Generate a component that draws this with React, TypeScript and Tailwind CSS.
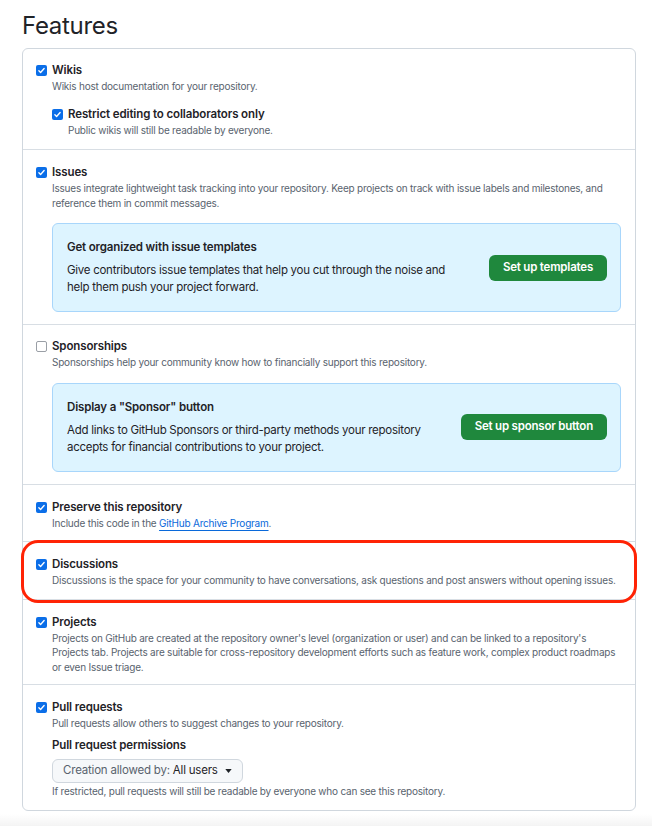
import type { ReactNode } from "react";

const font = { fontFamily: "Inter, 'Noto Sans', sans-serif" };

const Checkbox = ({ checked }: { checked: boolean }) =>
  checked ? (
    <span className="mt-[2px] flex h-[11px] w-[11px] shrink-0 items-center justify-center rounded-[2px] bg-[#0b6ee8]">
      <svg viewBox="0 0 12 12" className="h-[9px] w-[9px]" fill="none">
        <path d="M2.5 6.3l2.3 2.3 4.7-5.2" stroke="white" strokeWidth="1.8" strokeLinecap="round" strokeLinejoin="round" />
      </svg>
    </span>
  ) : (
    <span className="mt-[2px] h-[11px] w-[11px] shrink-0 rounded-[2px] border border-[#9a9fa6] bg-white" />
  );

const Option = ({
  checked = true,
  title,
  children,
  extra,
}: {
  checked?: boolean;
  title: string;
  children: ReactNode;
  extra?: ReactNode;
}) => (
  <div className="flex items-start gap-[5px]">
    <Checkbox checked={checked} />
    <div className="min-w-0 flex-1">
      <div className="text-[11.5px] font-semibold leading-[15px] tracking-[-0.12px] text-[#1f2328]">{title}</div>
      <p className="mt-[1px] text-[10px] leading-[14.5px] tracking-[-0.22px] text-[#59636e]">{children}</p>
      {extra}
    </div>
  </div>
);

const Callout = ({ title, text, button }: { title: string; text: ReactNode; button: string }) => (
  <div className="mr-[1px] mt-[13px] flex items-center justify-between rounded-[6px] border border-[#a8d6fb] bg-[#ddf4ff] py-[15px] pl-[14px] pr-[13px]">
    <div>
      <div className="text-[11.5px] font-semibold leading-[16px] tracking-[-0.15px] text-[#1f2328]">{title}</div>
      <p className="mt-[7px] text-[11.5px] leading-[17px] tracking-[-0.27px] text-[#1f2328]">{text}</p>
    </div>
    <button className="h-[26px] rounded-[6px] bg-[#1f883d] px-[14px] text-[11.5px] font-semibold tracking-[-0.2px] text-white">
      {button}
    </button>
  </div>
);

const Section = ({ children, className = "" }: { children: ReactNode; className?: string }) => (
  <section className={`border-t border-[#d8dee4] px-[13px] ${className}`}>{children}</section>
);

export default function App() {
  return (
    <div className="min-h-[826px] bg-white" style={font}>
      <div className="pb-[3px] pl-[22px] pr-[16px] pt-[11px]">
        <h2 className="text-[24px] font-normal leading-[30px] tracking-[-0.3px] text-[#1f2328]">Features</h2>
        <div className="mt-[7px] rounded-[6px] border border-[#d0d7de]">
          <section className="px-[13px] pb-[12px] pt-[14px]">
            <Option
              title="Wikis"
              extra={
                <div className="mt-[13px]">
                  <Option title="Restrict editing to collaborators only">
                    Public wikis will still be readable by everyone.
                  </Option>
                </div>
              }
            >
              Wikis host documentation for your repository.
            </Option>
          </section>

          <Section className="pb-[12px] pt-[15px]">
            <Option
              title="Issues"
              extra={
                <Callout
                  title="Get organized with issue templates"
                  text={
                    <>
                      Give contributors issue templates that help you cut through the noise and
                      <br />
                      help them push your project forward.
                    </>
                  }
                  button="Set up templates"
                />
              }
            >
              Issues integrate lightweight task tracking into your repository. Keep projects on track with issue labels and milestones, and reference them in commit messages.
            </Option>
          </Section>

          <Section className="pb-[12px] pt-[14px]">
            <Option
              checked={false}
              title="Sponsorships"
              extra={
                <Callout
                  title={'Display a "Sponsor" button'}
                  text={
                    <>
                      Add links to GitHub Sponsors or third-party methods your repository
                      <br />
                      accepts for financial contributions to your project.
                    </>
                  }
                  button="Set up sponsor button"
                />
              }
            >
              Sponsorships help your community know how to financially support this repository.
            </Option>
          </Section>

          <Section className="pb-[11px] pt-[15px]">
            <Option title="Preserve this repository">
              Include this code in the{" "}
              <a href="#" className="text-[#0969da] underline underline-offset-[3px]">
                GitHub Archive Program
              </a>
              .
            </Option>
          </Section>

          <Section className="relative pb-[11px] pt-[15px]">
            <Option title="Discussions">
              Discussions is the space for your community to have conversations, ask questions and post answers without opening issues.
            </Option>
            <div className="pointer-events-none absolute -bottom-[4px] -left-[2px] -right-[2px] -top-[2px] rounded-[17px] border-[3.5px] border-[#ff2305]" />
          </Section>

          <Section className="pb-[10px] pt-[15px]">
            <Option title="Projects">
              Projects on GitHub are created at the repository owner's level (organization or user) and can be linked to a repository's Projects tab. Projects are suitable for cross-repository development efforts such as feature work, complex product roadmaps or even Issue triage.
            </Option>
          </Section>

          <Section className="pb-[12px] pt-[15px]">
            <Option
              title="Pull requests"
              extra={
                <div className="mt-[6px]">
                  <div className="text-[11.5px] font-semibold leading-[16px] tracking-[-0.12px] text-[#1f2328]">
                    Pull request permissions
                  </div>
                  <button className="mt-[6px] flex h-[24px] items-center gap-[7px] rounded-[6px] border border-[#d0d7de] bg-[#f6f8fa] px-[10px] text-[11.5px] tracking-[-0.2px] text-[#1f2328]">
                    <span>
                      <span className="text-[#59636e]">Creation allowed by:</span> All users
                    </span>
                    <svg viewBox="0 0 8 5" className="h-[4px] w-[7px]" fill="#1f2328">
                      <path d="M0 0h8L4 5z" />
                    </svg>
                  </button>
                  <p className="mt-[1px] text-[10px] leading-[14.5px] tracking-[-0.22px] text-[#59636e]">
                    If restricted, pull requests will still be readable by everyone who can see this repository.
                  </p>
                </div>
              }
            >
              Pull requests allow others to suggest changes to your repository.
            </Option>
          </Section>
        </div>
      </div>
      <div className="h-[14px] bg-gradient-to-b from-white to-[#f2f2f2]" />
    </div>
  );
}
